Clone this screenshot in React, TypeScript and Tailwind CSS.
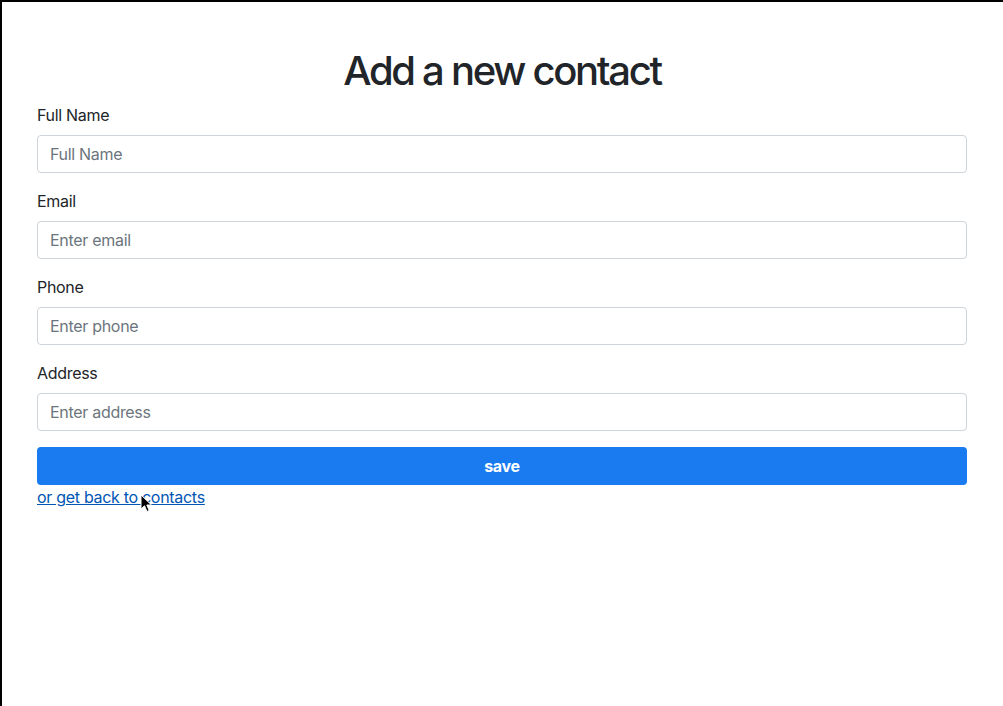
import React from "react";

type Field = {
  label: string;
  placeholder: string;
  type: string;
};

const fields: Field[] = [
  { label: "Full Name", placeholder: "Full Name", type: "text" },
  { label: "Email", placeholder: "Enter email", type: "email" },
  { label: "Phone", placeholder: "Enter phone", type: "text" },
  { label: "Address", placeholder: "Enter address", type: "text" },
];

function Cursor() {
  return (
    <svg
      className="absolute left-[103px] top-[9px] pointer-events-none"
      width="14"
      height="20"
      viewBox="0 0 14 20"
    >
      <path
        d="M1 1 L1 15 L4.5 11.8 L7 17.5 L9.2 16.5 L6.8 11 L11.5 11 Z"
        fill="#000"
        stroke="#fff"
        strokeWidth="1"
        strokeLinejoin="round"
      />
    </svg>
  );
}

export default function App() {
  return (
    <div
      className="w-[1003px] h-[706px] bg-white border-t-2 border-l-2 border-black overflow-hidden text-[#212529] tracking-[-0.3px]"
      style={{ fontFamily: "Inter, 'Noto Sans', 'Liberation Sans', sans-serif" }}
    >
      <div className="w-[930px] ml-[35px] pt-[45px]">
        <h1 className="text-[40px] leading-[48px] font-medium text-center mb-2 tracking-[-2.3px]">
          Add a new contact
        </h1>
        <form onSubmit={(e) => e.preventDefault()}>
          {fields.map((field) => (
            <div key={field.label} className="mb-4">
              <label className="block text-base leading-6 mb-2">
                {field.label}
              </label>
              <input
                type={field.type}
                placeholder={field.placeholder}
                className="block w-full h-[38px] px-3 text-base tracking-[-0.3px] border border-[#ced4da] rounded-[4px] placeholder:text-[#6c757d] outline-none"
              />
            </div>
          ))}
          <button
            type="submit"
            className="block w-full h-[38px] bg-[#1a7bf0] text-white font-bold text-base rounded-[4px]"
          >
            save
          </button>
        </form>
        <div className="relative">
          <a
            href="#"
            className="text-base leading-6 text-[#0056b3] underline"
          >
            or get back to contacts
          </a>
          <Cursor />
        </div>
      </div>
    </div>
  );
}
